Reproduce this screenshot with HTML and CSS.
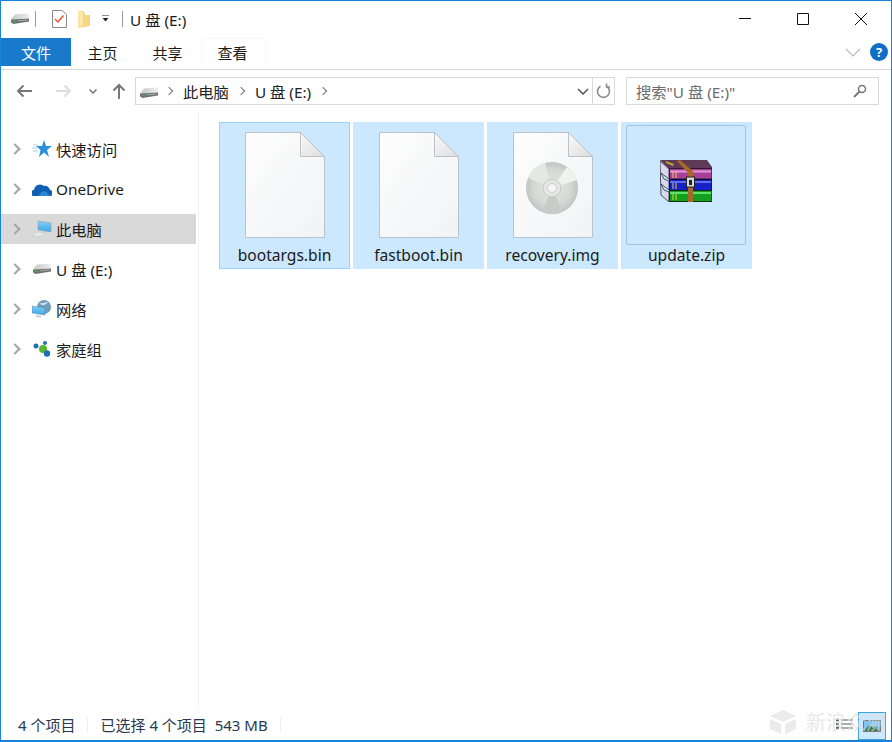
FILE: index.html
```html
<!DOCTYPE html>
<html lang="zh-CN">

<head>
  <meta charset="UTF-8">
  <meta name="viewport" content="width=device-width, initial-scale=1.0">
  <title>U 盘 (E:)</title>
  <link rel="stylesheet" href="styles.css">
</head>

<body>
  <!-- shared icons -->
  <svg class="defs" width="0" height="0">
    <defs>
      <linearGradient id="paper" x1="0" y1="0" x2="1" y2="1">
        <stop offset="0" stop-color="#fdfdfd" />
        <stop offset="1" stop-color="#f2f3f5" />
      </linearGradient>
      <linearGradient id="fold" x1="0" y1="0" x2="1" y2="1">
        <stop offset="0" stop-color="#fafafa" />
        <stop offset="1" stop-color="#dcdcdc" />
      </linearGradient>
      <linearGradient id="screen" x1="0" y1="0" x2="0" y2="1">
        <stop offset="0" stop-color="#7ed0f7" />
        <stop offset="1" stop-color="#3fa6e6" />
      </linearGradient>
      <linearGradient id="driveTop" x1="0" y1="0" x2="1" y2="0">
        <stop offset="0" stop-color="#c4c5c5" />
        <stop offset="1" stop-color="#eeeeee" />
      </linearGradient>
      <radialGradient id="disc" cx="0.5" cy="0.5" r="0.5">
        <stop offset="0" stop-color="#e6e7e6" />
        <stop offset="0.7" stop-color="#d6d8d6" />
        <stop offset="1" stop-color="#c2c5c2" />
      </radialGradient>
      <symbol id="drive" viewBox="0 0 20 12">
        <path d="M1 6.500 5 1.500 19 .5 19 5.500Z" fill="url(#driveTop)" />
        <path d="M1 6.500 19 5.500V8.500L3.500 11 1 9.500Z" fill="#6f7172" />
        <path d="M2 8 6.500 7.400V9L2.800 9.600Z" fill="#4fa04f" />
        <path d="M8 7.800 17.500 6.900" stroke="#b5b6b6" stroke-width="0.800" />
      </symbol>
      <symbol id="doc" viewBox="0 0 80 106">
        <path d="M.5.5H55.500L79.500 24.500V105.500H.5Z" fill="url(#paper)" stroke="#bcc2c9" />
        <path d="M55.500.5V24.500H79.500Z" fill="url(#fold)" stroke="#bcc2c9" />
      </symbol>
    </defs>
  </svg>

  <div class="window">
    <header class="titlebar">
      <div class="qat">
        <svg class="qat-drive" width="20" height="12"><use href="#drive" /></svg>
        <span class="qat-sep"></span>
        <svg class="qat-props" width="15" height="20" viewBox="0 0 15 20">
          <path d="M.5 1.500H10L14.500 5.500V18.500H.5Z" fill="#fff" stroke="#8a8a8a" />
          <path d="M3 10 6 13 11.500 6.500" fill="none" stroke="#e5562a" stroke-width="1.500" />
        </svg>
        <svg class="qat-folder" width="14" height="18" viewBox="0 0 14 18">
          <path d="M1 1H7L8 5H13V16L1 18Z" fill="#f6d67e" />
          <path d="M1 1V18L6 15V2Z" fill="#fbe6a8" />
        </svg>
        <svg class="qat-more" width="8" height="8" viewBox="0 0 8 8">
          <path d="M0 0H7" stroke="#222" />
          <path d="M.5 3H6.500L3.500 6.500Z" fill="#222" />
        </svg>
        <span class="qat-sep"></span>
      </div>
      <span class="window-title">U 盘 (E:)</span>
      <div class="caption">
        <svg width="46" height="38" viewBox="0 0 46 38"><path d="M17 18.500H29" stroke="#111" /></svg>
        <svg width="46" height="38" viewBox="0 0 46 38"><path d="M17.500 13.500H28.500V24.500H17.500Z" fill="none" stroke="#111" /></svg>
        <svg width="46" height="38" viewBox="0 0 46 38"><path d="M17 13 29 25M29 13 17 25" stroke="#111" /></svg>
      </div>
    </header>

    <nav class="ribbon">
      <a class="tab tab-file">文件</a>
      <a class="tab">主页</a>
      <a class="tab">共享</a>
      <a class="tab tab-view">查看</a>
      <div class="ribbon-right">
        <svg width="16" height="9" viewBox="0 0 16 9"><path d="M1 1 8 8 15 1" fill="none" stroke="#b9b9b9" stroke-width="1.200" /></svg>
        <span class="help">?</span>
      </div>
    </nav>

    <div class="addressbar">
      <div class="nav-buttons">
        <svg width="16" height="14" viewBox="0 0 16 14"><path d="M16 7H2M7.500 1.500 2 7 7.500 12.500" fill="none" stroke="#777" stroke-width="2" /></svg>
        <svg width="16" height="14" viewBox="0 0 16 14"><path d="M0 7H14M8.500 1.500 14 7 8.500 12.500" fill="none" stroke="#ddd" stroke-width="2" /></svg>
        <svg width="8" height="5" viewBox="0 0 8 5"><path d="M.5.5 4 4 7.500.5" fill="none" stroke="#777" stroke-width="1.500" /></svg>
        <svg width="14" height="16" viewBox="0 0 14 16"><path d="M7 16V2M1.500 7.500 7 2 12.500 7.500" fill="none" stroke="#777" stroke-width="2" /></svg>
      </div>
      <div class="path">
        <svg class="path-drive" width="20" height="12"><use href="#drive" /></svg>
        <i class="crumb-arrow"></i>
        <span class="crumb">此电脑</span>
        <i class="crumb-arrow"></i>
        <span class="crumb">U 盘 (E:)</span>
        <i class="crumb-arrow"></i>
        <svg class="path-drop" width="12" height="7" viewBox="0 0 12 7"><path d="M1 1 6 6 11 1" fill="none" stroke="#555" stroke-width="1.500" /></svg>
        <span class="path-refresh">
          <svg width="15" height="16" viewBox="0 0 15 16"><path d="M4.500 3.200A6 6 0 1 0 10.500 3.200M10.500 .5V4H14" fill="none" stroke="#8a8a8a" stroke-width="1.600" /></svg>
        </span>
      </div>
      <div class="search">
        <span class="search-text">搜索"U 盘 (E:)"</span>
        <svg width="14" height="14" viewBox="0 0 14 14"><circle cx="9" cy="5" r="3.500" fill="none" stroke="#777" stroke-width="1.500" /><path d="M6.500 7.500 1 13" stroke="#777" stroke-width="2" /></svg>
      </div>
    </div>

    <div class="content">
      <aside class="sidebar">
        <div class="side-row">
          <i class="chevron"></i>
          <svg width="20" height="18" viewBox="0 0 20 18">
            <path d="M12 0 14 6H20L15 10 17 17 12 12.500 7 17 8.500 10 4 6H10Z" fill="#2a90e0" />
            <path d="M1 5H6M0 8H5M1 11H6" stroke="#9fd0f3" />
          </svg>
          <span>快速访问</span>
        </div>
        <div class="side-row">
          <i class="chevron"></i>
          <svg width="20" height="13" viewBox="0 0 20 13">
            <path d="M2 13A3 3 0 0 1 2 7 6 6 0 0 1 12 3 5 5 0 0 1 18 7 3 3 0 0 1 17 13Z" fill="#0f5fb3" />
            <path d="M6 13 10 8.500 14 8.500 18 13Z" fill="#2c84d6" />
          </svg>
          <span>OneDrive</span>
        </div>
        <div class="side-row side-row-active">
          <i class="chevron"></i>
          <svg width="20" height="18" viewBox="0 0 20 18">
            <path d="M6 1 19 3V12L6 10Z" fill="url(#screen)" stroke="#8fa6b5" stroke-width="0.700" />
            <path d="M0 16 5 12 14 13 8 17Z" fill="#e6e8ea" stroke="#b9bdc1" stroke-width="0.500" />
          </svg>
          <span>此电脑</span>
        </div>
        <div class="side-row">
          <i class="chevron"></i>
          <svg width="20" height="12"><use href="#drive" /></svg>
          <span>U 盘 (E:)</span>
        </div>
        <div class="side-row">
          <i class="chevron"></i>
          <svg width="20" height="18" viewBox="0 0 20 18">
            <circle cx="12" cy="7" r="7" fill="#6f9dbb" />
            <path d="M7 3C10 4 13 2 16 2 13 6 10 6 7 3Z" fill="#cfe3ee" />
            <path d="M0 6 13 8V15L0 13Z" fill="url(#screen)" stroke="#5c88a5" stroke-width="0.500" />
            <path d="M4 15 9 16 9 17.500 4 17Z" fill="#c5cbd0" />
          </svg>
          <span>网络</span>
        </div>
        <div class="side-row">
          <i class="chevron"></i>
          <svg width="18" height="16" viewBox="0 0 18 16">
            <circle cx="3" cy="5" r="2.500" fill="#1f6fb5" />
            <circle cx="10" cy="8" r="4" fill="#5cb531" />
            <circle cx="12" cy="2" r="2" fill="#1f6fb5" />
            <circle cx="14" cy="12.500" r="3.200" fill="#1f6fb5" />
          </svg>
          <span>家庭组</span>
        </div>
      </aside>

      <main class="files">
        <div class="tile tile-focus">
          <svg class="file-icon" width="80" height="106"><use href="#doc" /></svg>
          <span class="file-name">bootargs.bin</span>
        </div>
        <div class="tile">
          <svg class="file-icon" width="80" height="106"><use href="#doc" /></svg>
          <span class="file-name">fastboot.bin</span>
        </div>
        <div class="tile">
          <svg class="file-icon" width="80" height="106" viewBox="0 0 80 106">
            <use href="#doc" width="80" height="106" />
            <circle cx="39" cy="56" r="26" fill="url(#disc)" />
            <path d="M39 56 15 46A26 26 0 0 1 32 31Z" fill="#e6e8e6" />
            <path d="M39 56 54 35A26 26 0 0 1 64 48Z" fill="#eef3ee" />
            <path d="M39 56 50 80A26 26 0 0 1 29 80Z" fill="#c8cbc8" />
            <circle cx="39" cy="56" r="9" fill="#e4e5e4" stroke="#c8cac8" />
            <circle cx="39" cy="56" r="4.500" fill="#f4f5f4" stroke="#cfd1cf" />
          </svg>
          <span class="file-name">recovery.img</span>
        </div>
        <div class="tile tile-archive">
          <div class="archive-box">
            <svg class="rar" width="52" height="42" viewBox="0 0 52 42">
              <path d="M0 0H47L52 7V9H9Z" fill="#5f3a56" />
              <path d="M0 1 9 9V19L1 13 4 19 9 21V30L1 24 4 30 9 32V42L1 35 0 1Z" fill="#d8d8ee" stroke="#2a2a3a" stroke-width="0.800" />
              <path d="M9.500 8.500H52V19H9.500Z" fill="#a8409a" stroke="#2a1a28" />
              <path d="M10 11.500H51" stroke="#e79adb" stroke-width="2" />
              <path d="M9.500 19.500H52V30.500H9.500Z" fill="#1420c8" stroke="#0a0a30" />
              <path d="M10 22H51" stroke="#5f6cf0" stroke-width="2" />
              <path d="M9.500 30.500H52V41.500H9.500Z" fill="#12a01e" stroke="#0a300c" />
              <path d="M10 33H51" stroke="#5fe06a" stroke-width="2" />
              <path d="M13 12V18M16 12V18M13 23V29M16 23V29M13 34V40M16 34V40" stroke="#e8d23a" />
              <path d="M20 0 33 11V42H28V13L17 1Z" fill="#a8682a" />
              <path d="M6 1 14 4 13 6 6 3Z" fill="#b8a838" />
              <rect x="26.500" y="17" width="8" height="10" fill="#d9d9d9" stroke="#222" />
              <rect x="29" y="20" width="3" height="5" fill="#222" />
            </svg>
          </div>
          <span class="file-name">update.zip</span>
        </div>
      </main>
    </div>

    <footer class="statusbar">
      <span class="status-count">4 个项目</span>
      <i class="status-sep"></i>
      <span class="status-selected">已选择 4 个项目&nbsp; 543 MB</span>
      <i class="status-sep"></i>
      <div class="view-switch">
        <svg width="18" height="14" viewBox="0 0 18 14">
          <path d="M1 2H4M1 6H4M1 10H4" stroke="#666" stroke-width="2.500" />
          <path d="M6 2H18M6 6H18M6 10H18" stroke="#555" />
        </svg>
        <span class="view-large">
          <svg width="18" height="12" viewBox="0 0 18 12">
            <rect x="0.500" y="0.500" width="17" height="11" fill="#7fc3ee" stroke="#777" />
            <path d="M1 11 6 5 10 8 13 6 17 11Z" fill="#3d7a4f" />
          </svg>
        </span>
      </div>
    </footer>

    <!-- site stamp over the corner -->
    <div class="stamp">
      <svg width="28" height="26" viewBox="0 0 28 26">
        <path d="M14 1 27 7 14 13 1 7Z" fill="#e3e3e3" />
        <path d="M1 10 12 15V25L1 20Z" fill="#e3e3e3" />
        <path d="M27 10 16 15V25L27 20Z" fill="#e3e3e3" />
      </svg>
      <span>新浪众测</span>
    </div>
  </div>
</body>

</html>
```

FILE: styles.css
```css
* {
  box-sizing: border-box;
}

html,
body {
  margin: 0;
  height: 100%;
}

body {
  background: #fff;
  color: #1a1a1a;
  font-family: "Noto Sans", "Noto Sans CJK SC", sans-serif;
  font-size: 15.3px;
}

.defs {
  position: absolute;
}

.window {
  position: relative;
  width: 892px;
  height: 742px;
  display: flex;
  flex-direction: column;
  border: 1px solid #1883d7;
  border-bottom-width: 2px;
  overflow: hidden;
}

/* title bar */
.titlebar {
  height: 37px;
  flex: none;
  display: flex;
  align-items: center;
  padding-bottom: 2px;
}

.qat {
  display: flex;
  align-items: center;
  padding-left: 9px;
}

.qat-sep {
  width: 1px;
  height: 16px;
  background: #9a9a9a;
}

.qat-drive {
  margin-right: 5px;
}

.qat-props {
  margin-left: 16px;
}

.qat-folder {
  margin-left: 10px;
}

.qat-more {
  margin-left: 11px;
  margin-right: 12px;
}

.window-title {
  margin-left: 7px;
}

.caption {
  margin-left: auto;
  display: flex;
  gap: 12px;
  margin-right: 7px;
}

/* ribbon tabs */
.ribbon {
  height: 32px;
  flex: none;
  display: flex;
  align-items: stretch;
  border-bottom: 1px solid #d9d9d9;
}

.tab {
  width: 65px;
  display: flex;
  align-items: center;
  justify-content: center;
  height: 28px;
  font-size: 15px;
}

.tab-file {
  width: 70px;
  background: #1979ca;
  color: #fff;
}

.tab:nth-child(2) {
  padding-right: 2px;
}

.tab:nth-child(3) {
  padding-right: 2px;
}

.tab-view {
  height: 31px;
  padding: 0 2px 3px 0;
  border: 1px solid #f8f8f8;
  border-bottom: none;
}

.ribbon-right {
  margin-left: auto;
  display: flex;
  align-items: center;
  height: 28px;
  gap: 9px;
  margin-right: 3px;
}

.help {
  width: 18px;
  height: 18px;
  border-radius: 50%;
  background: #0f6fc6;
  color: #fff;
  font-size: 13px;
  font-weight: 700;
  line-height: 18px;
  text-align: center;
}

/* back / forward and address */
.addressbar {
  height: 42px;
  flex: none;
  display: flex;
  align-items: center;
}

.nav-buttons {
  width: 134px;
  flex: none;
  display: flex;
  align-items: center;
  padding-left: 15px;
}

.nav-buttons svg:nth-child(2) {
  margin-left: 24px;
}

.nav-buttons svg:nth-child(3) {
  margin-left: 17px;
}

.nav-buttons svg:nth-child(4) {
  margin-left: 15px;
}

.path {
  width: 480px;
  height: 28px;
  flex: none;
  display: flex;
  align-items: center;
  border: 1px solid #d9d9d9;
  padding-left: 3px;
}

.path-drive {
  margin-top: 3px;
  margin-right: -2px;
}

.crumb-arrow {
  width: 6px;
  height: 6px;
  border-top: 1.500px solid #777;
  border-right: 1.500px solid #777;
  transform: rotate(45deg);
  margin: 0 11px 0 9px;
}

.crumb {
  color: #222;
  margin-top: -1px;
}

.path-drop {
  margin-left: auto;
  margin-right: 3px;
}

.path-refresh {
  width: 22px;
  height: 26px;
  border-left: 1px solid #d9d9d9;
  display: flex;
  align-items: center;
  justify-content: center;
}

.search {
  width: 253px;
  height: 28px;
  flex: none;
  margin-left: 11px;
  display: flex;
  align-items: center;
  justify-content: space-between;
  border: 1px solid #d9d9d9;
  padding: 0 11px 0 9px;
  color: #6d6d6d;
}

.search-text {
  margin-top: -1px;
}

/* navigation pane and file area */
.content {
  flex: 1;
  display: flex;
  min-height: 0;
}

.sidebar {
  width: 198px;
  flex: none;
  padding: 22px 2px 0 0;
  display: flex;
  flex-direction: column;
  gap: 10px;
  border-right: 1px solid #f2f2f2;
}

.side-row {
  height: 30px;
  display: flex;
  align-items: center;
  position: relative;
  padding-left: 31px;
  color: #1a1a1a;
}

.side-row svg {
  width: 20px;
  flex: none;
}

.side-row span {
  margin: -1px 0 0 4px;
}

.side-row-active {
  background: #d9d9d9;
}

.chevron {
  position: absolute;
  left: 10px;
  top: 11px;
  width: 8px;
  height: 8px;
  border-top: 2px solid #a6a6a6;
  border-right: 2px solid #a6a6a6;
  transform: rotate(45deg);
}

.files {
  flex: 1;
  display: flex;
  align-items: flex-start;
  gap: 3px;
  padding: 10px 0 0 20px;
}

.tile {
  width: 131px;
  height: 147px;
  background: #cce8ff;
  display: flex;
  flex-direction: column;
  align-items: center;
  padding-top: 10px;
}

.tile-focus {
  border: 1px solid #99d1ff;
  padding-top: 9px;
}

.file-icon {
  flex: none;
}

.file-name {
  margin-top: 6px;
  font-size: 15.600px;
  line-height: 22px;
  white-space: nowrap;
}

.tile-archive {
  padding-top: 3px;
}

.archive-box {
  width: 120px;
  height: 120px;
  flex: none;
  margin-right: 1px;
  border: 1px solid #a4c5df;
  border-radius: 2px;
  display: flex;
  align-items: center;
  justify-content: center;
}

.rar {
  margin: 0 0 8px 0;
}

.tile-archive .file-name {
  margin-top: -1px;
}

/* status bar */
.statusbar {
  height: 31px;
  flex: none;
  display: flex;
  align-items: center;
  padding-left: 17px;
  font-size: 15px;
  color: #26394f;
}

.status-sep {
  width: 1px;
  height: 16px;
  background: #f0f0f0;
  margin: 0 12px;
}

.view-switch {
  margin-left: auto;
  align-self: stretch;
  display: flex;
  align-items: center;
  gap: 5px;
}

.view-large {
  width: 28px;
  height: 28px;
  margin-top: 3px;
  border: 1px solid #3fa3e0;
  background: #cce8ff;
  display: flex;
  align-items: center;
  justify-content: center;
  margin-right: 5px;
}

.stamp {
  position: absolute;
  right: 5px;
  bottom: 4px;
  display: flex;
  align-items: center;
  gap: 9px;
  opacity: 0.7;
  color: #e0e0e0;
  font-size: 20px;
}
```
